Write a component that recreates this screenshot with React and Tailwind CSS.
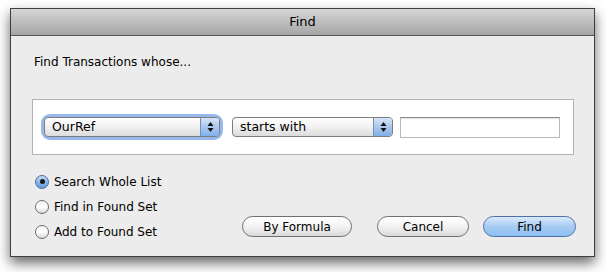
import React from 'react';

const font = { fontFamily: '"DejaVu Sans", "Liberation Sans", sans-serif' };

const Arrows = () => (
  <svg width="7" height="12" viewBox="0 0 7 12">
    <path d="M3.5 1 L6.5 5 L0.5 5 Z" fill="#111" />
    <path d="M3.5 11 L6.5 7 L0.5 7 Z" fill="#111" />
  </svg>
);

const PopUp = ({ label, width }) => (
  <div
    className={`flex h-[20px] items-stretch overflow-hidden rounded-[4px] border border-[#7d7d7d] bg-gradient-to-b from-white via-[#f1f1f1] to-[#dcdcdc] ${width}`}
  >
    <div className="flex flex-1 items-center pl-[7px] text-[12.5px] text-black">{label}</div>
    <div className="flex w-[19px] items-center justify-center border-l border-[#7a8fb0] bg-gradient-to-b from-[#d5e5f8] via-[#a9c8ef] to-[#7fb0ea]">
      <Arrows />
    </div>
  </div>
);

const Radio = ({ label, checked }) => (
  <div className="flex h-[25px] items-center">
    {checked ? (
      <div className="flex h-[14px] w-[14px] items-center justify-center rounded-full border border-[#4e6a98] bg-gradient-to-b from-[#c3dbf7] via-[#8ab7ec] to-[#5f9be2]">
        <div className="h-[5px] w-[5px] rounded-full bg-[#1b1b1b]" />
      </div>
    ) : (
      <div className="h-[14px] w-[14px] rounded-full border border-[#6e6e6e] bg-gradient-to-b from-[#f4f4f4] via-white to-[#d8d8d8]" />
    )}
    <span className="ml-[5px] text-[12px] text-black">{label}</span>
  </div>
);

const Button = ({ label, width, primary }) => (
  <div
    className={`flex h-[21px] items-center justify-center rounded-full border text-[12px] text-black ${width} ${
      primary
        ? 'border-[#4f6fa6] bg-gradient-to-b from-[#dbeafb] via-[#a7cbf3] to-[#8ec0f3]'
        : 'border-[#707070] bg-gradient-to-b from-white via-[#f3f3f3] to-[#d9d9d9]'
    }`}
  >
    {label}
  </div>
);

const App = () => {
  return (
    <div className="h-[272px] w-[606px] bg-white pl-[10px] pt-[8px]" style={font}>
      <div className="flex h-[249px] w-[585px] flex-col border border-[#3f3f3f] bg-[#ececec] shadow-[0_6px_12px_rgba(0,0,0,0.6)]">
        <div className="flex h-[27px] items-center justify-center border-b border-[#555] bg-gradient-to-b from-[#d6d6d6] to-[#a6a6a6] text-[13px] text-black">
          Find
        </div>
        <div className="flex flex-1 flex-col pl-[21px] pr-[20px] pt-[18px]">
          <div className="ml-[2px] h-[16px] text-[12px] leading-[16px] text-black">
            Find Transactions whose...
          </div>
          <div className="mt-[29px] flex h-[56px] items-center border border-[#b4b4b4] bg-white pl-[11px]">
            <div className="rounded-[6px] shadow-[0_0_0_3px_rgba(115,160,230,0.75)]">
              <PopUp label="OurRef" width="w-[176px]" />
            </div>
            <div className="ml-[12px]">
              <PopUp label="starts with" width="w-[161px]" />
            </div>
            <div className="ml-[7px] h-[21px] w-[160px] border border-[#b9b9b9] border-t-[#8d8d8d] bg-white shadow-[inset_0_1px_1px_rgba(0,0,0,0.12)]" />
          </div>
          <div className="mt-[14px] flex items-end justify-between">
            <div className="ml-[3px] flex flex-col">
              <Radio label="Search Whole List" checked />
              <Radio label="Find in Found Set" />
              <Radio label="Add to Found Set" />
            </div>
            <div className="mb-[7px] mr-[-2px] flex items-center">
              <Button label="By Formula" width="w-[110px]" />
              <div className="ml-[25px]">
                <Button label="Cancel" width="w-[92px]" />
              </div>
              <div className="ml-[14px]">
                <Button label="Find" width="w-[93px]" primary />
              </div>
            </div>
          </div>
        </div>
      </div>
    </div>
  );
};

export default App;
